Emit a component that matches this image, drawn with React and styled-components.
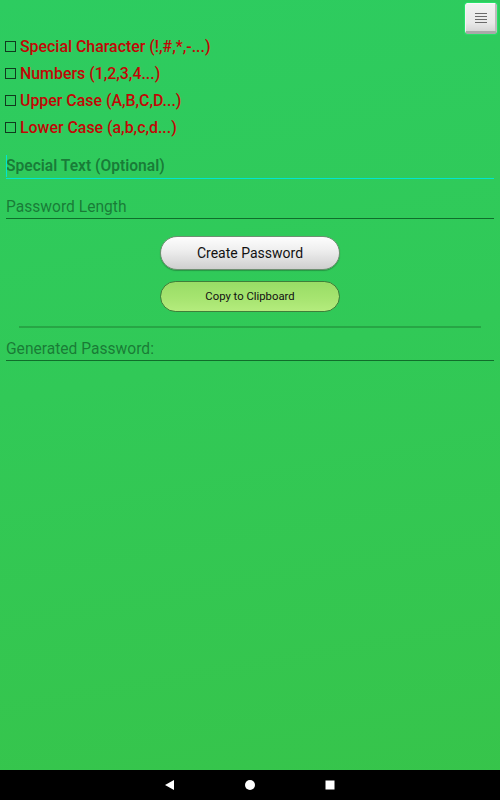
import React from 'react'
import styled, { createGlobalStyle } from 'styled-components'

const GlobalStyle = createGlobalStyle`
  html, body {
    margin: 0;
    padding: 0;
  }
  body {
    font-family: Roboto, "Liberation Sans", sans-serif;
  }
`

function App() {
  const options = [
    'Special Character (!,#,*,-...)',
    'Numbers (1,2,3,4...)',
    'Upper Case (A,B,C,D...)',
    'Lower Case (a,b,c,d...)',
  ]

  return (
    <Screen>
      <GlobalStyle />
      <Content>
        <TopBar>
          <MenuButton>
            <MenuLine />
            <MenuLine />
            <MenuLine />
            <MenuLine />
          </MenuButton>
        </TopBar>

        <Options>
          {options.map((label) => (
            <OptionRow key={label}>
              <Box />
              <OptionLabel>{label}</OptionLabel>
            </OptionRow>
          ))}
        </Options>

        <Field $focused $gap={21}>
          <Caret />
          <FieldText $bold>Special Text (Optional)</FieldText>
        </Field>

        <Field $gap={19}>
          <FieldText>Password Length</FieldText>
        </Field>

        <Buttons>
          <CreateButton>Create Password</CreateButton>
          <CopyButton>Copy to Clipboard</CopyButton>
        </Buttons>

        <Divider />

        <Field $gap={12}>
          <FieldText>Generated Password:</FieldText>
        </Field>
      </Content>

      <NavBar>
        <svg width="12" height="12" viewBox="0 0 12 12">
          <polygon points="10,1 10,11 1,6" fill="#fff" />
        </svg>
        <svg width="12" height="12" viewBox="0 0 12 12">
          <circle cx="6" cy="6" r="5" fill="#fff" />
        </svg>
        <svg width="12" height="12" viewBox="0 0 12 12">
          <rect x="1.5" y="1.5" width="9" height="9" fill="#fff" />
        </svg>
      </NavBar>
    </Screen>
  )
}

export default App

const Screen = styled.div`
  width: 500px;
  height: 800px;
  display: flex;
  flex-direction: column;
  background: linear-gradient(170deg, #2dcc60 0%, #31c957 45%, #37c44a 100%);
  overflow: hidden;
`

const Content = styled.div`
  flex: 1;
  display: flex;
  flex-direction: column;
  padding: 0 6px;
`

const TopBar = styled.div`
  display: flex;
  justify-content: flex-end;
  padding-top: 3px;
  margin-right: -3px;
`

const MenuButton = styled.div`
  width: 32px;
  height: 31px;
  box-sizing: border-box;
  display: flex;
  flex-direction: column;
  align-items: center;
  justify-content: center;
  gap: 2px;
  background: linear-gradient(180deg, #f2f2f2 0%, #e8e8e8 70%, #d6d6d6 100%);
  border-top: 1px solid #fafafa;
  border-left: 1px solid #f4f4f4;
  border-right: 2px solid #bdbdbd;
  border-bottom: 3px solid #a9a9a9;
  border-radius: 2px;
  outline: 1px solid #29e06a;
`

const MenuLine = styled.span`
  width: 12px;
  height: 1px;
  background: #6a6a6a;
`

const Options = styled.div`
  display: flex;
  flex-direction: column;
  gap: 9px;
  margin-top: 3px;
`

const OptionRow = styled.div`
  display: flex;
  align-items: center;
  gap: 4px;
  height: 18px;
  margin-left: -1px;
`

const Box = styled.span`
  width: 9px;
  height: 9px;
  margin-top: 1px;
  border: 1px solid #103a1e;
  box-sizing: content-box;
`

const OptionLabel = styled.span`
  color: #c20606;
  font-size: 15.9px;
  font-weight: 500;
`

const Field = styled.div`
  position: relative;
  display: flex;
  align-items: flex-end;
  margin-top: ${(p) => p.$gap}px;
  padding-bottom: ${(p) => (p.$focused ? '3px' : '2px')};
  border-bottom: 1px solid ${(p) => (p.$focused ? '#00e6d2' : 'rgba(0, 60, 20, 0.65)')};
`

const Caret = styled.span`
  position: absolute;
  left: 0;
  bottom: 1px;
  width: 1px;
  height: 22px;
  background: #00e6d2;
`

const FieldText = styled.span`
  color: rgba(10, 70, 30, 0.6);
  font-size: 15.6px;
  font-weight: ${(p) => (p.$bold ? 600 : 400)};
  line-height: 18px;
`

const Buttons = styled.div`
  display: flex;
  flex-direction: column;
  align-items: center;
  gap: 11px;
  margin-top: 17px;
`

const CreateButton = styled.div`
  width: 180px;
  height: 34px;
  box-sizing: border-box;
  border-radius: 17px;
  display: flex;
  align-items: center;
  justify-content: center;
  font-size: 14px;
  color: #111;
  background: linear-gradient(180deg, #fdfdfd 0%, #efefef 40%, #cfcfcf 100%);
  border: 1px solid #6f8f72;
  box-shadow: 0 1px 1px rgba(0, 0, 0, 0.25);
`

const CopyButton = styled.div`
  width: 180px;
  height: 31px;
  box-sizing: border-box;
  border-radius: 16px;
  display: flex;
  align-items: center;
  justify-content: center;
  font-size: 11.3px;
  color: #111;
  background: linear-gradient(180deg, #99dc66 0%, #a6e470 55%, #b4ec7d 100%);
  border: 1px solid #3f7e3a;
`

const Divider = styled.div`
  height: 2px;
  margin: 14px 13px 0;
  background: #27a645;
`

const NavBar = styled.div`
  height: 30px;
  background: #000;
  display: flex;
  align-items: center;
  justify-content: center;
  gap: 68px;
`
